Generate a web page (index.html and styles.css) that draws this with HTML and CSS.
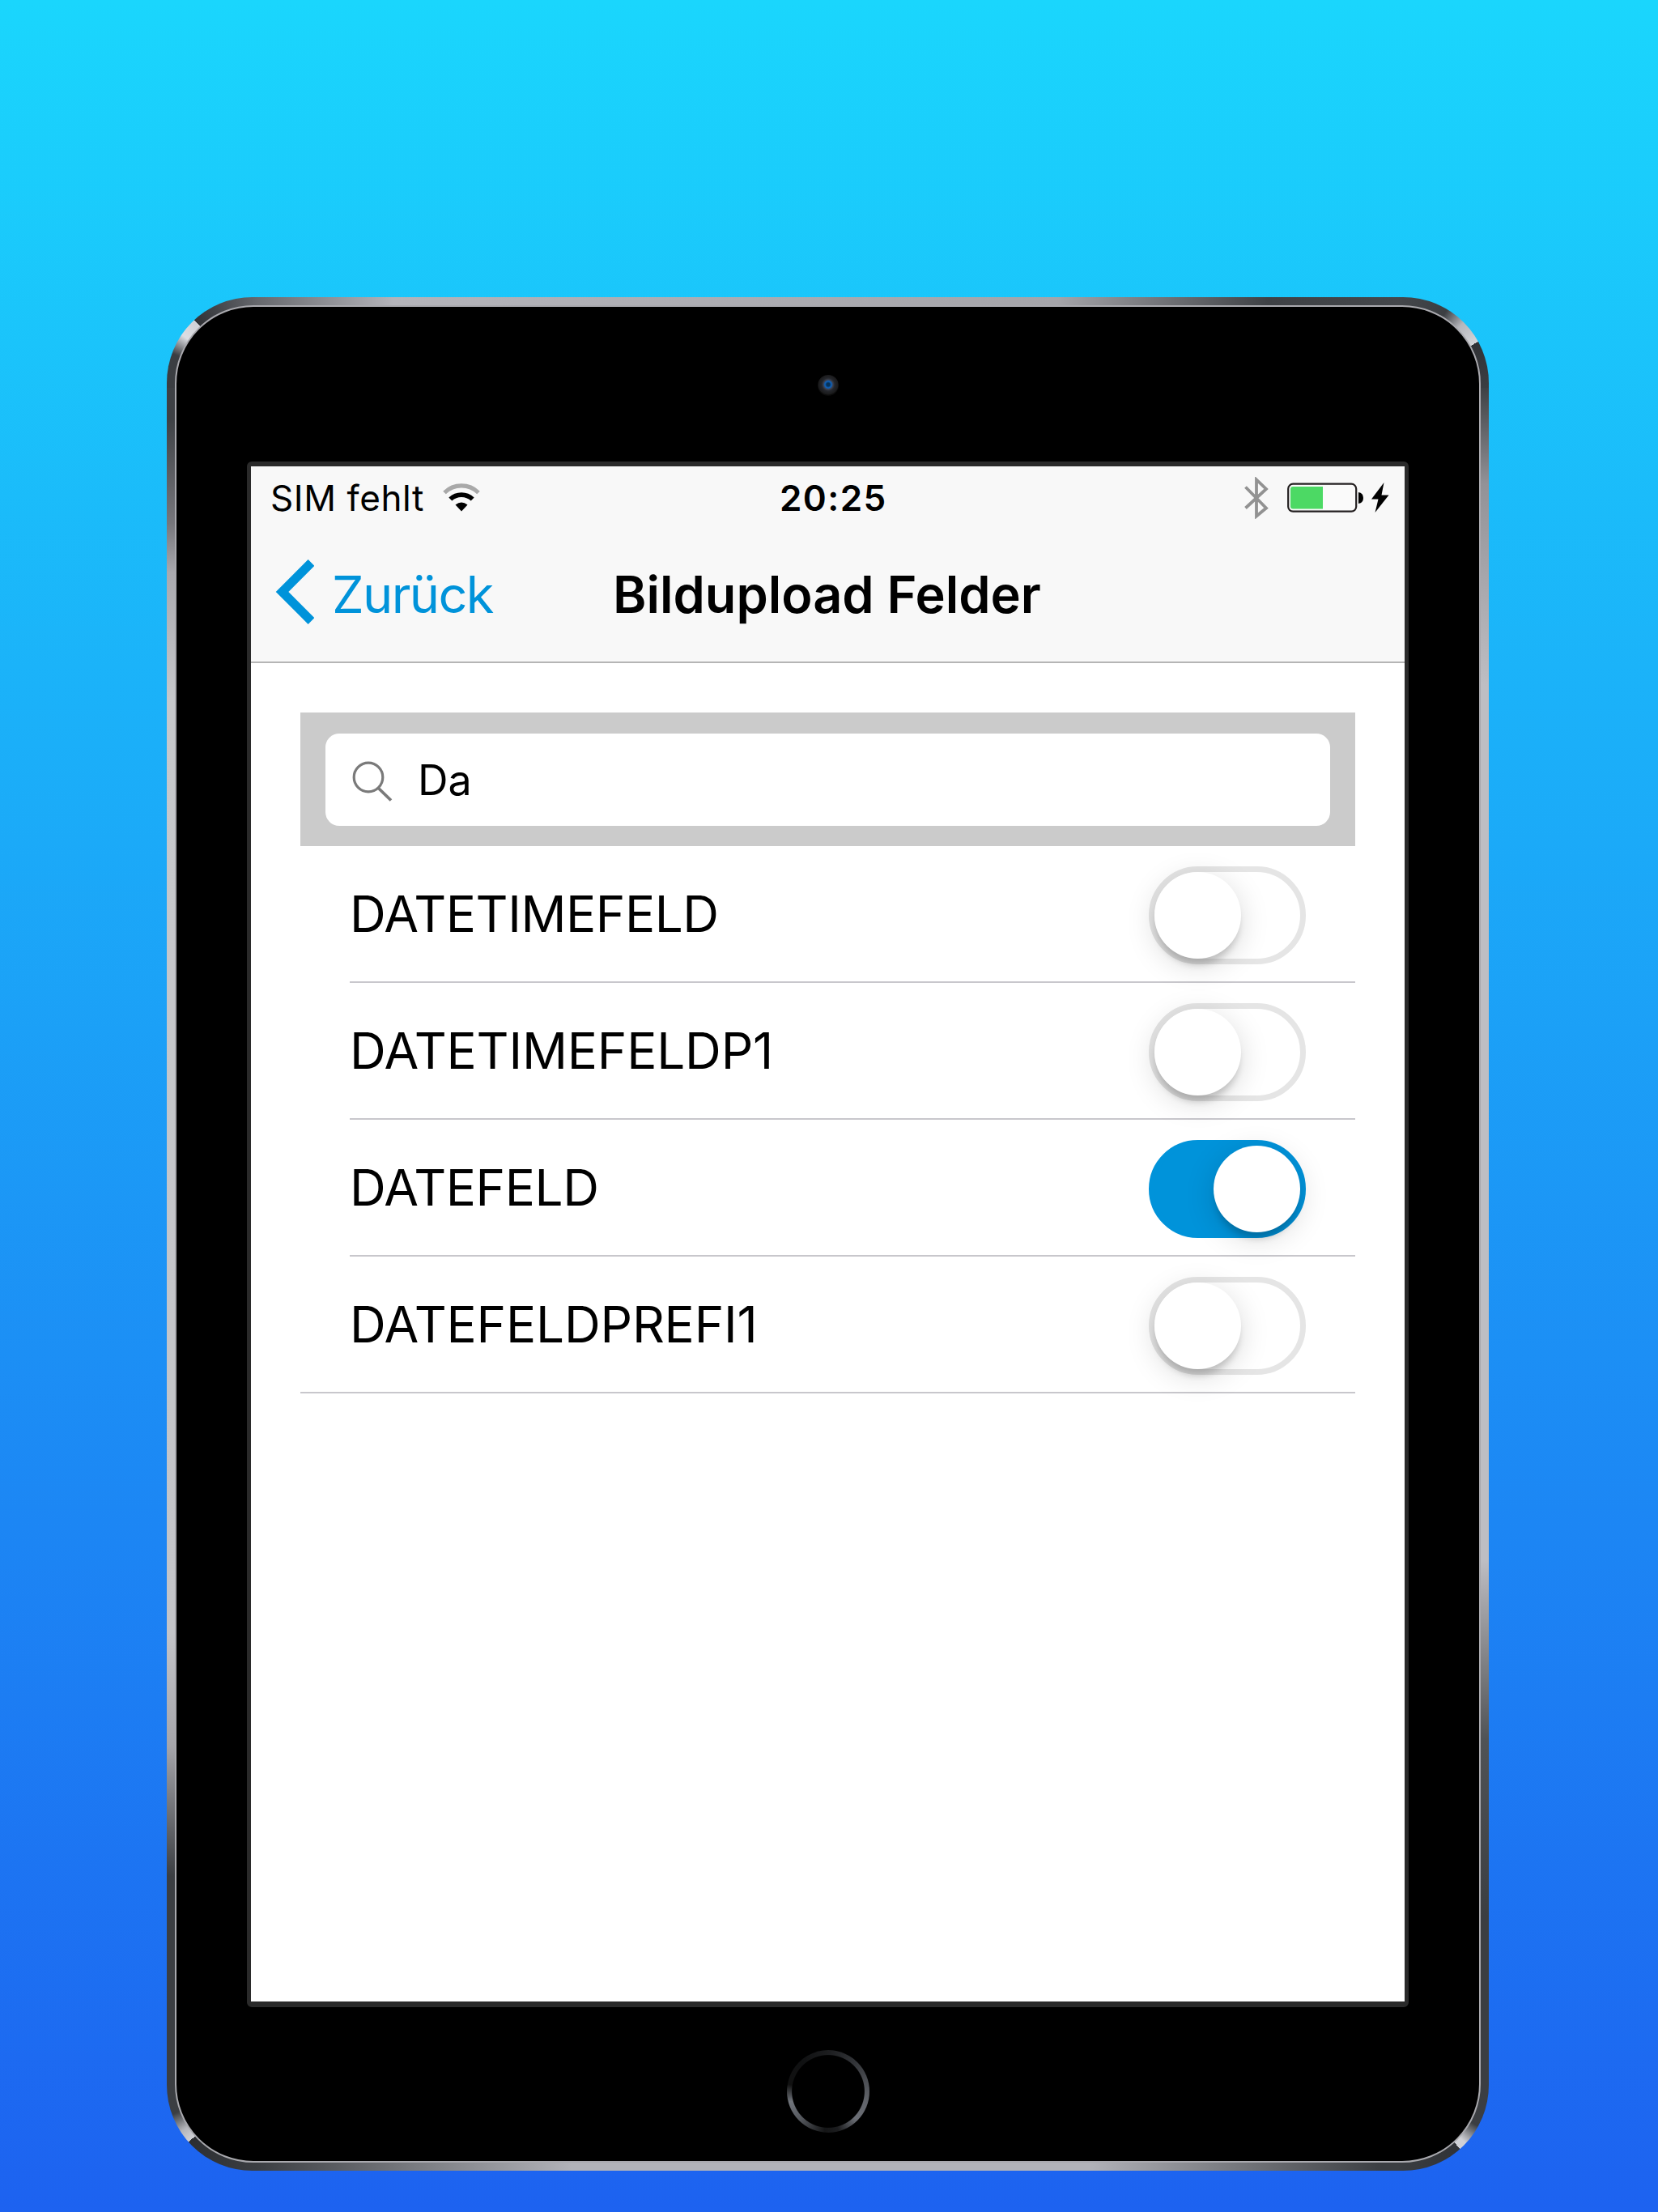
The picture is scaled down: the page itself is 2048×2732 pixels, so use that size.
FILE: index.html
```html
<!DOCTYPE html>
<html lang="de">
<head>
<meta charset="utf-8">
<title>Bildupload Felder</title>
<link rel="stylesheet" href="styles.css">
</head>
<body>
<div class="device">
  <div class="bezel">
    <div class="camera-area"><span class="camera"></span></div>
    <main class="screen">
      <header class="header">
        <div class="status">
          <div class="status-left">
            <span class="carrier">SIM fehlt</span>
            <svg class="wifi" viewBox="0 0 46 36" width="46" height="36">
              <path d="M2 11.500A30 30 0 0 1 44 11.500" fill="none" stroke="#a9a9a9" stroke-width="5.200"/>
              <path d="M9.300 19.500A20 20 0 0 1 36.700 19.500" fill="none" stroke="#000" stroke-width="5.800"/>
              <path d="M15.500 26.500Q23 20.500 30.500 26.500L23 34.500Z" fill="#000"/>
            </svg>
          </div>
          <span class="time">20:25</span>
          <div class="status-right">
            <svg class="bluetooth" viewBox="0 0 30 52" width="30" height="52">
              <path d="M1.500 12.500L27 38.500L15 48.500V3.500L27 15L1.500 38.500" fill="none" stroke="#929292" stroke-width="3.800"/>
            </svg>
            <svg class="battery" viewBox="0 0 94 38" width="94" height="38">
              <rect x="1.200" y="1.700" width="84" height="34" rx="6" fill="#fafafa" stroke="#231f20" stroke-width="2.200"/>
              <path d="M7 5H44V32.500H7Q4 32.500 4 29.500V8Q4 5 7 5Z" fill="#4cd964"/>
              <path d="M88 12Q94 13 94 19T88 26Z" fill="#000"/>
            </svg>
            <svg class="bolt" viewBox="0 0 22 38" width="22" height="38">
              <path d="M15.500 0L0 20.500H8.500L4.500 37L21.500 15.500H12.500Z" fill="#000"/>
            </svg>
          </div>
        </div>
        <nav class="nav">
          <a class="back">
            <svg viewBox="0 0 48 80" width="48" height="80"><path d="M44.500 4L8.500 40L44.500 76" fill="none" stroke="#0093da" stroke-width="11"/></svg>
            <span>Zurück</span>
          </a>
          <h1 class="title">Bildupload Felder</h1>
        </nav>
      </header>
      <section class="list">
        <div class="search">
          <div class="field">
            <svg viewBox="0 0 52 52" width="52" height="52"><circle cx="20" cy="20" r="17.800" fill="none" stroke="#7a7a7a" stroke-width="3.200"/><path d="M32 33L48 48.500" stroke="#7a7a7a" stroke-width="3.800"/></svg>
            <span>Da</span>
          </div>
        </div>
        <ul class="rows">
          <li class="row"><span class="tight">DATETIMEFELD</span><i class="toggle"></i></li>
          <li class="row"><span>DATETIMEFELDP1</span><i class="toggle"></i></li>
          <li class="row"><span class="tight">DATEFELD</span><i class="toggle on"></i></li>
          <li class="row"><span>DATEFELDPREFI1</span><i class="toggle"></i></li>
        </ul>
      </section>
    </main>
    <div class="home-area"><span class="home"></span></div>
  </div>
</div>
</body>
</html>
```
FILE: styles.css
```css
* { box-sizing: border-box; }
body {
  margin: 0;
  width: 2048px;
  height: 2732px;
  padding: 367px 209px 51px 206px;
  overflow: hidden;
  background: linear-gradient(#1ad6fd, #1d62f0);
  font-family: Inter, "Liberation Sans", sans-serif;
  color: #000;
}
.device {
  height: 2314px;
  padding: 10px;
  border-radius: 106px;
  background:
    conic-gradient(from 317deg at 112px 112px, #303236 0deg, #55575c 30deg, #66686d 43deg, transparent 43deg, transparent 313deg, #3b3e42 313deg, #3b3e42 335deg, #dcdde2 348deg, #d0d1d6 360deg) 0 0 / 112px 112px no-repeat,
    conic-gradient(from 60deg at 0 112px, #303236 0deg, #3b3e42 30deg, transparent 30deg, transparent 300deg, #44474b 300deg, #3b3e42 332deg, #b5b6bb 345deg, #d4d5d9 360deg) 100% 0 / 112px 112px no-repeat,
    conic-gradient(from 228deg at 112px 0, #d0d1d6 0deg, #b5b6bb 8deg, #3b3e42 20deg, #3b3e42 42deg, transparent 42deg, transparent 312deg, #3b3e42 312deg, #2c2e31 360deg) 0 100% / 112px 112px no-repeat,
    conic-gradient(from 138deg at 0 0, #303236 0deg, #3b3e42 42deg, transparent 42deg, transparent 312deg, #3b3e42 312deg, #3b3e42 342deg, #d0d1d6 355deg) 100% 100% / 112px 112px no-repeat,
    linear-gradient(90deg, #66686d 112px, #b4b4ba 280px, #a5a5aa 1100px, #3e4145 1360px, #44474b 1520px) 0 0 / 100% 12px no-repeat,
    linear-gradient(90deg, #3b3e42 112px, #77797e 300px, #b1b2b8 500px, #b1b2b8 1140px, #3b3e42 1500px) 0 100% / 100% 12px no-repeat,
    linear-gradient(#3e4145 150px, #77777c 280px, #a9a9ae 340px, #c6c8cb 500px, #c3c4c8 1650px, #a5a5aa 1790px, #3b3e42 1950px) 0 0 / 12px 100% no-repeat,
    linear-gradient(#3e4145 112px, #929297 230px, #bebec3 480px, #bebec3 1560px, #505356 1780px, #3b3e42 2000px) 100% 0 / 12px 100% no-repeat,
    #777;
}
.bezel {
  height: 2294px;
  border: 2px solid #a9a9ae;
  border-radius: 97px;
  background: #000;
  display: flex;
  flex-direction: column;
  align-items: center;
}
.camera-area {
  height: 191px;
  padding-top: 84px;
}
.camera {
  display: block;
  width: 26px;
  height: 26px;
  border-radius: 50%;
  background: radial-gradient(circle at 50% 46%, #06325a 0 2px, #0d63c0 4px, #3d3f4a 6px, #24262b 8px, #1a1a1b 12px, #0a0a0a 13px);
}
.screen {
  width: 1435px;
  height: 1909px;
  flex: none;
  border: solid #2a2a2a;
  border-width: 6px 5px 7px;
  border-radius: 6px;
  background: #fff;
}
.header {
  height: 243px;
  background: #f8f8f8;
  border-bottom: 2px solid #b5b5b5;
}
.status {
  height: 78px;
  display: grid;
  grid-template-columns: 629px auto 1fr;
  padding: 0 19px 0 24px;
  font-size: 44px;
  line-height: 78px;
}
.status-left, .status-right { display: flex; align-items: center; }
.status-right { justify-content: flex-end; }
.carrier { width: 213px; white-space: nowrap; letter-spacing: .6px; }
.time { font-weight: 600; letter-spacing: 1.4px; }
.bluetooth { margin-right: 23px; }
.battery { margin-right: 10px; }
.nav {
  display: grid;
  grid-template-columns: 447px 1fr;
  align-items: center;
  height: 160px;
  font-size: 63px;
  line-height: 160px;
}
.back {
  display: flex;
  align-items: center;
  padding-left: 30px;
  color: #0093da;
}
.back svg { margin-bottom: 6px; }
.back span { margin-left: 22px; letter-spacing: -1.6px; }
.title {
  margin: 0;
  font-size: 63px;
  font-weight: 600;
  white-space: nowrap;
}
.list { padding: 61px 61px 0 61px; }
.search {
  height: 165px;
  padding: 26px 31px 24px;
  background: #cbcbcb;
}
.field {
  height: 114px;
  border-radius: 17px;
  background: #fff;
  display: flex;
  align-items: center;
  padding-left: 33px;
  font-size: 52px;
  line-height: 114px;
}
.field svg { margin-top: 5px; }
.field span { margin: 1px 0 0 29px; }
.rows { list-style: none; margin: 0; padding: 0; border-bottom: 2px solid #c8c7cc; }
.row {
  height: 169px;
  margin-left: 61px;
  padding-right: 61px;
  display: flex;
  justify-content: space-between;
  align-items: center;
  border-bottom: 2px solid #c8c7cc;
  font-size: 62px;
  line-height: 168px;
  letter-spacing: -.2px;
}
.row .tight { letter-spacing: -.45px; }
.row:last-child { border-bottom: 0; height: 167px; }
.toggle {
  width: 194px;
  height: 121px;
  margin-top: 3px;
  border: 7px solid #e5e5e5;
  border-radius: 61px;
  display: flex;
}
.toggle::before {
  content: "";
  width: 107px;
  height: 107px;
  border-radius: 50%;
  background: #fff;
  box-shadow: 0 10px 9px -3px rgba(0,0,0,.18), 0 8px 36px rgba(0,0,0,.15);
}
.toggle.on {
  justify-content: flex-end;
  background: #0093da;
  border-color: #0093da;
}
.home-area { padding-top: 53px; }
.home {
  display: block;
  width: 102px;
  height: 102px;
  border-radius: 50%;
  background:
    radial-gradient(closest-side, #000 87%, transparent 89%),
    conic-gradient(#1c1d1f, #34363a 45deg, #5f6268 100deg, #6b6e75 135deg, #1c1d1f 165deg, #141516 185deg, #55585e 225deg, #70747b 255deg, #111 280deg, #101112 320deg, #1c1d1f);
}
```
